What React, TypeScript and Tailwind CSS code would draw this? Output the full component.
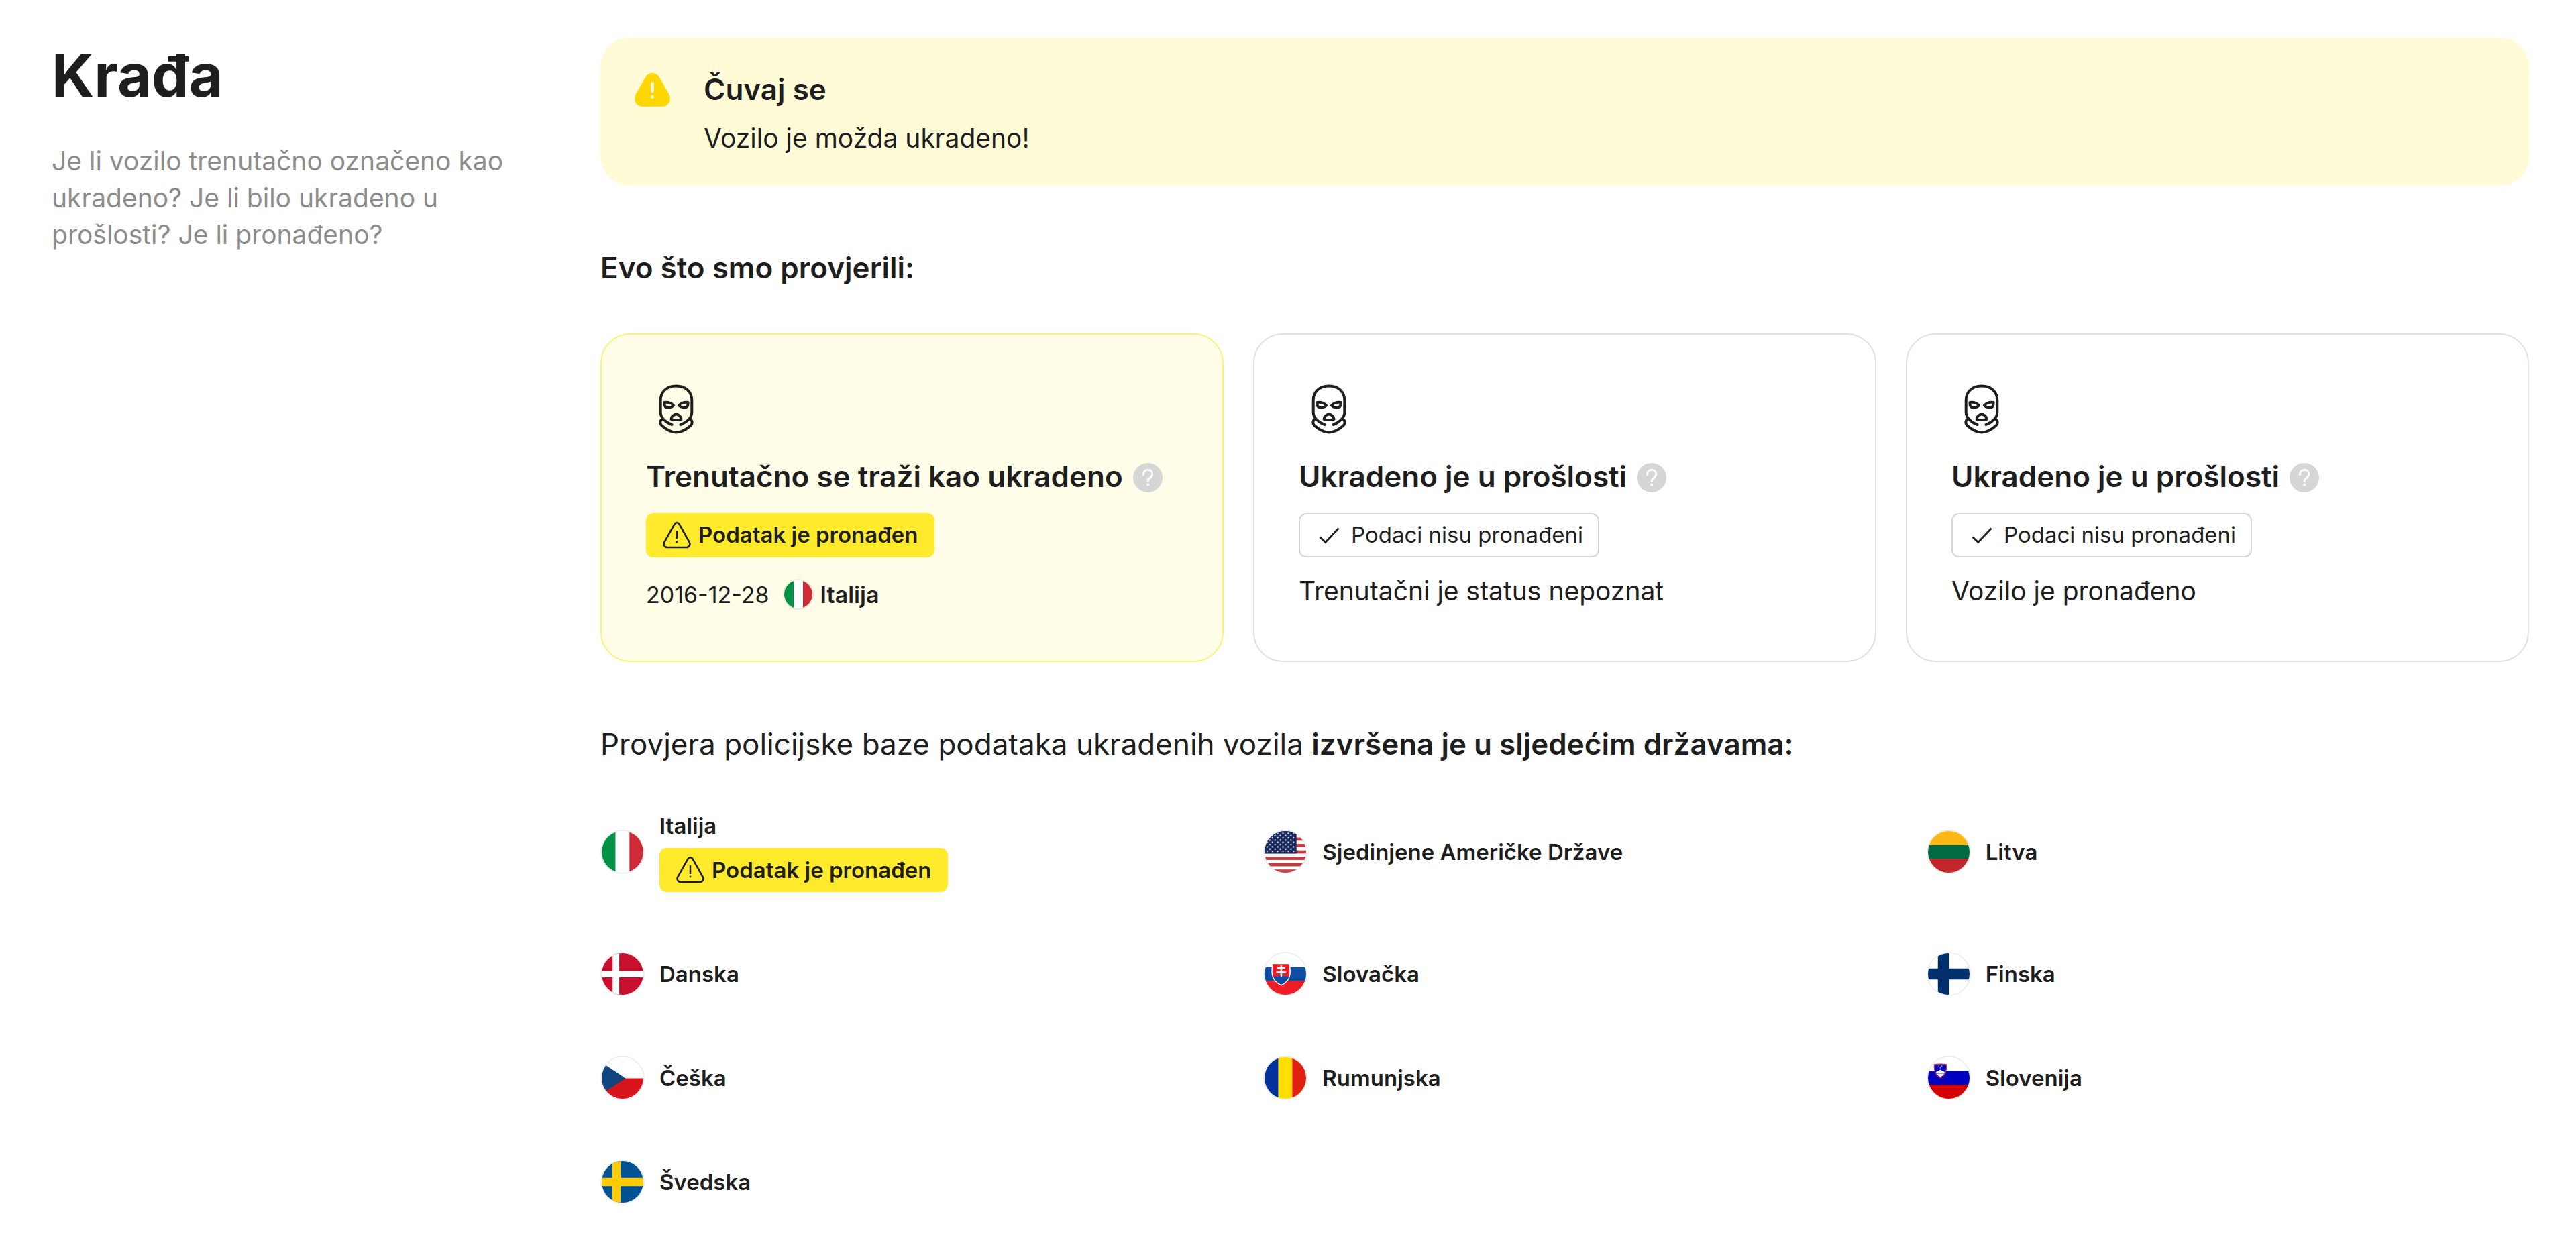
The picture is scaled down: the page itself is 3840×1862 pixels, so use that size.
import type { ReactNode } from "react";

/* ---------- icons ---------- */

function AlertSolidIcon() {
  return (
    <svg viewBox="0 0 66 66" className="size-[66px] shrink-0" aria-hidden="true">
      <path
        d="M33.5 9c-4.300 0-8 2.300-10.200 6.100L8.700 40.500c-1.800 3.100-1.900 8.500-.6 11.500 2 4.400 6 6.700 10.400 6.700h30c4.400 0 8.400-2.300 10.400-6.700 1.300-3 1.200-8.400-.6-11.500L43.700 15.100C41.500 11.300 37.800 9 33.500 9Z"
        fill="#ffd600"
      />
      <path d="M33.5 24.500v11.500" stroke="#fffbd6" strokeWidth="4.6" strokeLinecap="round" />
      <circle cx="33.5" cy="44.200" r="2.5" fill="#fffbd6" />
    </svg>
  );
}

function AlertOutlineIcon() {
  return (
    <svg viewBox="0 0 44 44" className="size-[44px] shrink-0" fill="none" stroke="#1e1e1e" aria-hidden="true">
      <path
        d="M18.600 5.100 3.300 32.300c-1.900 3.700.4 7.700 4.500 7.700h28.400c4.100 0 6.400-4 4.500-7.700L25.400 5.100c-1.500-2.600-5.300-2.600-6.800 0Z"
        strokeWidth="2.6"
        strokeLinejoin="round"
      />
      <path d="M22 15v13" strokeWidth="2.4" />
      <path d="M22 30.800v2.600" strokeWidth="2.4" />
    </svg>
  );
}

function CheckIcon() {
  return (
    <svg viewBox="0 0 44 44" className="size-[44px] shrink-0" fill="none" stroke="#1e1e1e" aria-hidden="true">
      <path d="M7.500 24.500 15.800 32.500 35.500 11.500" strokeWidth="2.8" />
    </svg>
  );
}

function BalaclavaIcon() {
  return (
    <svg
      viewBox="0 0 88 88"
      className="size-[88px]"
      fill="none"
      stroke="#1e1e1e"
      strokeWidth="4"
      strokeLinecap="round"
      strokeLinejoin="round"
      aria-hidden="true"
    >
      <path d="M38.500 68C30 65 21.700 58 21.700 50V32C21.700 19 31 10.500 45 10.500S68.300 19 68.300 32V50C68.300 58 60 65 51.500 68" />
      <path d="M23.700 60C20.500 62.500 20.700 67 23.500 69.500C31 76 38 79.500 45 79.500S59 76 66.500 69.500C69.300 67 69.500 62.500 66.300 60" />
      <path d="M27.500 35C33 34 38.500 36 41 39.500C37.500 43.500 29.500 43 28.200 40.500C27.500 39 27.300 37 27.500 35Z" />
      <path d="M62.500 35C57 34 51.500 36 49 39.500C52.500 43.500 60.500 43 61.800 40.500C62.500 39 62.700 37 62.500 35Z" />
      <path d="M45 52.500C42 52.500 37.500 56 37.500 59.500C37.500 61 41 61 45 61S52.500 61 52.500 59.500C52.500 56 48 52.500 45 52.500Z" />
    </svg>
  );
}

function HelpButton({ label }: { label: string }) {
  return (
    <button
      type="button"
      aria-label={label}
      className="mb-[4px] ml-[4px] inline-flex size-[44px] items-center justify-center rounded-full bg-[#d6d6d6] align-middle"
    >
      <svg viewBox="0 0 44 44" className="size-[44px]" fill="none" stroke="#fff" aria-hidden="true">
        <path
          d="M15.500 17.500c0-4.200 2.800-7.200 6.700-7.200 3.800 0 6.500 2.700 6.500 6.200 0 2.700-1.300 4.200-3.300 5.700-2.200 1.600-3.200 2.600-3.200 5.300"
          strokeWidth="3"
          strokeLinecap="round"
        />
        <circle cx="22.200" cy="32.500" r="2" fill="#fff" stroke="none" />
      </svg>
    </button>
  );
}

/* ---------- flags ---------- */

function Bars({ colors, vertical = false }: { colors: string[]; vertical?: boolean }) {
  return (
    <>
      {colors.map((color, i) =>
        vertical ? (
          <rect key={color} x={i * 21} width="21" height="63" fill={color} />
        ) : (
          <rect key={color} y={i * 21} width="63" height="21" fill={color} />
        ),
      )}
    </>
  );
}

function StarsAndStripes() {
  const stripe = 63 / 13;
  const rows = Array.from({ length: 9 }, (_, i) => i);
  return (
    <>
      <rect width="63" height="63" fill="#fff" />
      {[0, 2, 4, 6, 8, 10, 12].map((i) => (
        <rect key={i} y={i * stripe} width="63" height={stripe} fill="#c23b42" />
      ))}
      <rect width="48.5" height={stripe * 7} fill="#1b2d61" />
      {rows.map((r) =>
        Array.from({ length: r % 2 ? 5 : 6 }, (_, c) => (
          <circle key={`${r}-${c}`} cx={4 + (r % 2 ? 4 : 0) + c * 8} cy={3.4 + r * 3.4} r="1.2" fill="#d5d9e6" />
        )),
      )}
    </>
  );
}

const FLAGS: Record<string, ReactNode> = {
  it: <Bars vertical colors={["#009246", "#ffffff", "#ce2b37"]} />,
  us: <StarsAndStripes />,
  lt: <Bars colors={["#fdb913", "#006a44", "#c1272d"]} />,
  ro: <Bars vertical colors={["#00319c", "#ffde00", "#de2110"]} />,
  dk: (
    <>
      <rect width="63" height="63" fill="#c8102e" />
      <path d="M16.500 0h10v63h-10zM0 27h63v9.500H0z" fill="#fff" />
    </>
  ),
  fi: (
    <>
      <rect width="63" height="63" fill="#fff" />
      <path d="M15 0h17v63H15zM0 23h63v17H0z" fill="#002f6c" />
    </>
  ),
  se: (
    <>
      <rect width="63" height="63" fill="#005293" />
      <path d="M16 0h12.500v63H16zM0 25.200h63v12.600H0z" fill="#ffcb00" />
    </>
  ),
  cz: (
    <>
      <rect width="63" height="63" fill="#fff" />
      <path d="M0 32h63v31H0z" fill="#d7141a" />
      <path d="M0 8 36 32 0 56z" fill="#11457e" />
    </>
  ),
  sk: (
    <>
      <Bars colors={["#ffffff", "#0b4ea2", "#ee1c25"]} />
      <path d="M11 15h28l.5 13c0 11-6 17.500-14.200 21.500C17 45.500 10.500 39 10.500 28z" fill="#fff" />
      <path d="M12.500 16.500h25L38 28c0 10-5 15.500-12.700 19.500C17.500 43.500 12 38 12 28z" fill="#ee1c25" />
      <path d="M13.800 37c1.500-2.200 4.500-2.800 6.800-1.200 1.200-3.300 8.200-3.300 9.400 0 2.300-1.600 5.300-1 6.600 1.200-2.300 4.700-6.100 8-11.300 10.500C20 45 16 41.700 13.800 37z" fill="#0b4ea2" />
      <path d="M24 18h2.600v3.300h4.600v2.800h-4.600v3.600h6.200v2.900h-6.200v4.600H24v-4.600h-6.200v-2.900H24v-3.600h-4.600v-2.800H24z" fill="#fff" />
    </>
  ),
  si: (
    <>
      <Bars colors={["#ffffff", "#0000c0", "#d50000"]} />
      <path d="M9.500 11c3-1 15.500-1 18.500 0 .3 9-1 17-9.200 20.500C10.500 28 9.200 20 9.500 11z" fill="#0000c0" stroke="#c8283c" strokeWidth="1.2" />
      <path d="M12 23c1.500-1.200 2.500-2 3.500-1.800l3.300-2.400 3.300 2.400c1-.2 2 .6 3.500 1.800-1.300 3-3.300 5.200-6.800 6.800-3.500-1.600-5.500-3.800-6.800-6.800z" fill="#fff" />
      <path d="M13 25c2-1 3.500 1 5.800 0s3.800 1 5.800 0" fill="none" stroke="#6a78d8" strokeWidth="1" />
      <circle cx="16.500" cy="13.200" r=".9" fill="#b8a86a" />
      <circle cx="21" cy="13.200" r=".9" fill="#b8a86a" />
      <circle cx="18.800" cy="16" r=".9" fill="#b8a86a" />
    </>
  ),
};

function Flag({ code, small = false }: { code: string; small?: boolean }) {
  return (
    <span
      className={`${small ? "size-[46px]" : "size-[66px]"} shrink-0 overflow-hidden rounded-full border-2 border-black/7`}
    >
      <svg viewBox="0 0 63 63" className="size-full" aria-hidden="true">
        {FLAGS[code]}
      </svg>
    </span>
  );
}

/* ---------- building blocks ---------- */

function FoundBadge() {
  return (
    <span className="flex h-[66px] w-fit items-center gap-[10px] rounded-[11px] bg-[#ffeb2b] px-[24px] text-[33px] font-semibold">
      <AlertOutlineIcon />
      Podatak je pronađen
    </span>
  );
}

function NotFoundBadge() {
  return (
    <span className="flex h-[66px] w-fit items-center gap-[10px] rounded-[11px] border-2 border-[#d6d6d6] bg-white px-[22px] text-[33px]">
      <CheckIcon />
      Podaci nisu pronađeni
    </span>
  );
}

function CheckCard({ title, found = false, children }: { title: string; found?: boolean; children: ReactNode }) {
  return (
    <article
      className={`rounded-[44px] border-2 p-[66px] ${
        found ? "border-[#fff176] bg-[#fffde8]" : "border-[#e0e0e0] bg-white"
      }`}
    >
      <BalaclavaIcon />
      <h3 className="mt-[24px] text-[44px] leading-[66px] font-semibold">
        {title} <HelpButton label={`Više informacija: ${title}`} />
      </h3>
      <div className="mt-[22px]">{found ? <FoundBadge /> : <NotFoundBadge />}</div>
      <div className="mt-[22px]">{children}</div>
    </article>
  );
}

const COUNTRIES = [
  { code: "it", name: "Italija", found: true },
  { code: "us", name: "Sjedinjene Američke Države" },
  { code: "lt", name: "Litva" },
  { code: "dk", name: "Danska" },
  { code: "sk", name: "Slovačka" },
  { code: "fi", name: "Finska" },
  { code: "cz", name: "Češka" },
  { code: "ro", name: "Rumunjska" },
  { code: "si", name: "Slovenija" },
  { code: "se", name: "Švedska" },
];

export default function App() {
  return (
    <main className="flex min-h-screen items-start gap-[88px] bg-white pt-[56px] pr-[70px] pb-[66px] pl-[77px] font-[Inter,sans-serif] text-[#1e1e1e]">
      <header className="w-[730px] shrink-0">
        <h1 className="text-[88px] leading-[112px] font-bold">Krađa</h1>
        <p className="mt-[44px] text-[39px] leading-[55px] text-[#8c8c8c]">
          Je li vozilo trenutačno označeno kao ukradeno? Je li bilo ukradeno u prošlosti? Je li pronađeno?
        </p>
      </header>

      <div className="min-w-0 flex-1">
        <section className="flex gap-[44px] rounded-[44px] bg-[#fffbd6] p-[44px]">
          <AlertSolidIcon />
          <div>
            <h2 className="text-[44px] leading-[66px] font-semibold">Čuvaj se</h2>
            <p className="mt-[12px] text-[39px] leading-[55px]">Vozilo je možda ukradeno!</p>
          </div>
        </section>

        <section className="mt-[88px]">
          <h2 className="text-[44px] leading-[68px] font-semibold">Evo što smo provjerili:</h2>
          <div className="mt-[64px] grid grid-cols-3 gap-[44px]">
            <CheckCard title="Trenutačno se traži kao ukradeno" found>
              <p className="flex h-[66px] items-center text-[34px]">
                <time dateTime="2016-12-28">2016-12-28</time>
                <span className="ml-[20px] flex items-center gap-[10px] font-semibold">
                  <Flag code="it" small />
                  Italija
                </span>
              </p>
            </CheckCard>
            <CheckCard title="Ukradeno je u prošlosti">
              <p className="text-[39px] leading-[55px]">Trenutačni je status nepoznat</p>
            </CheckCard>
            <CheckCard title="Ukradeno je u prošlosti">
              <p className="text-[39px] leading-[55px]">Vozilo je pronađeno</p>
            </CheckCard>
          </div>
        </section>

        <section className="mt-[88px]">
          <h2 className="text-[44px] leading-[68px]">
            Provjera policijske baze podataka ukradenih vozila{" "}
            <strong className="font-semibold">izvršena je u sljedećim državama:</strong>
          </h2>
          <ul className="mt-[66px] grid grid-cols-3 gap-x-[90px] gap-y-[89px]">
            {COUNTRIES.map(({ code, name, found }) => (
              <li key={code} className="flex items-center gap-[22px] text-[33px] leading-[44px] font-semibold">
                <Flag code={code} />
                <div className="flex flex-col gap-[11px]">
                  <span>{name}</span>
                  {found && <FoundBadge />}
                </div>
              </li>
            ))}
          </ul>
        </section>
      </div>
    </main>
  );
}
